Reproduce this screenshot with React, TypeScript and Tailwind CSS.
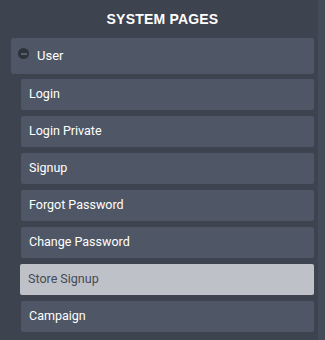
const pages = ['Login', 'Login Private', 'Signup', 'Forgot Password', 'Change Password', 'Store Signup', 'Campaign']

export default function App() {
  const selected = 'Store Signup'
  return (
    <div className="flex w-[325px] h-[340px] bg-[#3e4350] overflow-hidden" style={{ fontFamily: 'Roboto, "Liberation Sans", sans-serif' }}>
      <div className="flex-1 pl-[11px] pr-[4px]">
        <h2 className="text-center text-white font-bold text-[14px] leading-none pt-[12px] pb-[12px] tracking-[0.2px]" style={{ fontFamily: '"Liberation Sans", Arial, sans-serif' }}>
          SYSTEM PAGES
        </h2>
        <div className="flex items-center h-[36px] bg-[#4f5766] rounded-[2px] pl-[7px]">
          <span className="flex items-center justify-center w-[11px] h-[11px] rounded-full bg-[#2f333b] -mt-[5px]">
            <span className="w-[6px] h-[2px] bg-[#5a616e]" />
          </span>
          <span className="ml-[8px] text-white text-[13px]">User</span>
        </div>
        <div className="flex flex-col gap-[6px] mt-[5px] pl-[10px]">
          {pages.map(p => (
            <div key={p}
              className={`flex items-center h-[31px] rounded-[2px] pl-[8px] text-[12.5px] ${p === selected ? 'bg-[#bec1c8] text-[#454a55] -ml-[1px]' : 'bg-[#4f5766] text-white'}`}>
              {p}
            </div>
          ))}
        </div>
      </div>
      <div className="w-[7px] bg-[#454b58]" />
    </div>
  )
}
